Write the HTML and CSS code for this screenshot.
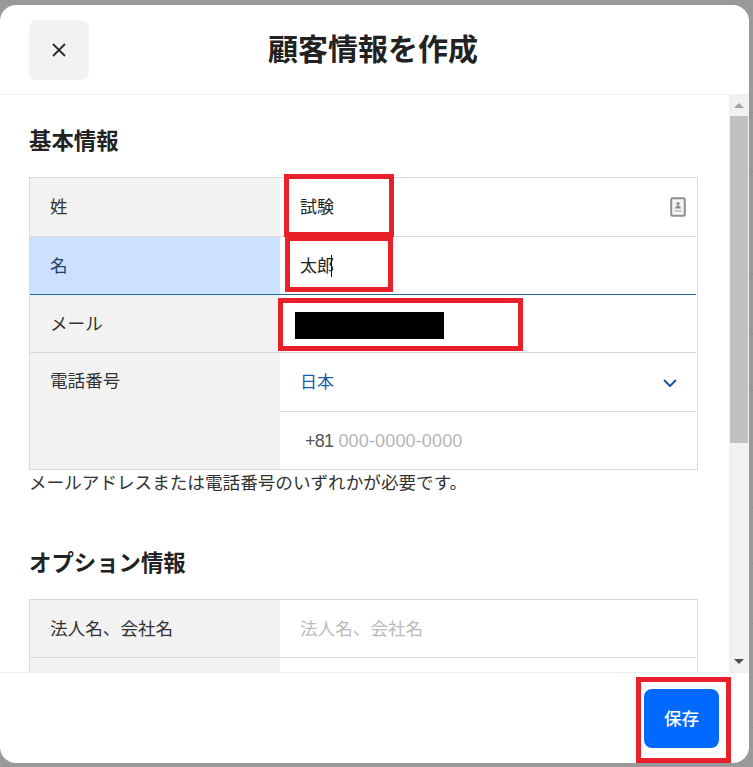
FILE: index.html
```html
<!DOCTYPE html>
<html lang="ja">
<head>
<meta charset="utf-8">
<title>顧客情報を作成</title>
<link rel="stylesheet" href="styles.css">
</head>
<body>
<div class="page">
  <div class="behind">
    <i class="b1"></i><i class="b2"></i><i class="b3"></i><i class="b4"></i><i class="b5"></i><i class="b6"></i><i class="b7"></i><i class="b8"></i><i class="b9"></i>
  </div>
  <div class="modal">
    <header class="head">
      <button class="close" aria-label="閉じる">
        <svg width="16" height="16" viewBox="0 0 16 16"><path d="M2 2 14 14M14 2 2 14" stroke="#2b2b2b" stroke-width="1.8" fill="none"/></svg>
      </button>
      <h1 class="title">顧客情報を作成</h1>
    </header>
    <div class="body">
      <div class="content">
        <h2 class="section first">基本情報</h2>
        <div class="table">
          <div class="row tall">
            <div class="label">姓</div>
            <div class="cell"><span class="value">試験</span>
              <svg class="card" width="16" height="20" viewBox="0 0 16 20"><rect x="1.2" y="1.2" width="13.6" height="17.6" rx="1.5" fill="#f4f4f4" stroke="#8f8f8f" stroke-width="2"/><circle cx="8" cy="6.6" r="1.6" fill="#8a8a8a"/><path d="M5.2 11.5c0-2 1.2-3 2.8-3s2.8 1 2.8 3z" fill="#8a8a8a"/><path d="M4.5 14h7" stroke="#bdbdbd" stroke-width="1.6"/></svg>
            </div>
          </div>
          <div class="row active">
            <div class="label">名</div>
            <div class="cell"><span class="value">太郎</span><span class="caret"></span></div>
          </div>
          <div class="row">
            <div class="label">メール</div>
            <div class="cell"></div>
          </div>
          <div class="row phone">
            <div class="label">電話番号</div>
            <div class="stack">
              <div class="select">
                <span class="country">日本</span>
                <svg width="14" height="8" viewBox="0 0 14 8"><path d="M1 1 7 7 13 1" stroke="#1d55a5" stroke-width="2" fill="none"/></svg>
              </div>
              <div class="tel"><span class="code">+81</span> <span class="hold">000-0000-0000</span></div>
            </div>
          </div>
        </div>
        <p class="hint">メールアドレスまたは電話番号のいずれかが必要です。</p>
        <h2 class="section second">オプション情報</h2>
        <div class="table">
          <div class="row">
            <div class="label">法人名、会社名</div>
            <div class="cell"><span class="ph">法人名、会社名</span></div>
          </div>
          <div class="row">
            <div class="label"></div>
            <div class="cell"></div>
          </div>
        </div>
      </div>
      <div class="scrollbar">
        <div class="arrow"><svg width="10" height="5" viewBox="0 0 10 5"><path d="M5 0 10 5H0z" fill="#a3a3a3"/></svg></div>
        <div class="thumb"></div>
        <div class="track"></div>
        <div class="arrow"><svg width="10" height="5" viewBox="0 0 10 5"><path d="M0 0H10L5 5z" fill="#505050"/></svg></div>
      </div>
    </div>
    <footer class="foot">
      <button class="save">保存</button>
    </footer>
  </div>
  <div class="mark m1"></div>
  <div class="mark m2"></div>
  <div class="mark m3"></div>
  <div class="mark m4"></div>
  <div class="redact"></div>
</div>
</body>
</html>
```
FILE: styles.css
```css
* { box-sizing: border-box; }
html, body { margin: 0; padding: 0; }
body {
  font-family: "Noto Sans CJK JP", "Liberation Sans", sans-serif;
  color: #333;
}
.page {
  position: relative;
  width: 753px;
  height: 767px;
  background: #999;
  overflow: hidden;
  padding-top: 5px;
}
.behind {
  position: absolute;
  top: 0;
  right: 0;
  width: 4px;
  height: 767px;
}
.behind i { position: absolute; left: 0; width: 4px; height: 1px; background: #8d8d8d; }
.b1 { top: 112px; } .b2 { top: 171px; } .b3 { top: 274px; } .b4 { top: 333px; } .b5 { top: 390px; }
.b6 { top: 507px; } .b7 { top: 563px; } .b8 { top: 623px; } .b9 { top: 727px; }

.modal {
  width: 749px;
  height: 758px;
  background: #fff;
  border-radius: 16px;
  overflow: hidden;
  display: flex;
  flex-direction: column;
}
.head {
  flex: none;
  height: 90px;
  border-bottom: 1px solid #eee;
  display: flex;
  align-items: center;
  padding: 0 29px;
  position: relative;
}
.close {
  width: 60px;
  height: 60px;
  border: 0;
  border-radius: 8px;
  background: #f2f2f2;
  display: flex;
  align-items: center;
  justify-content: center;
  padding: 0;
}
.title {
  margin: 0 0 6px 179px;
  font-size: 30px;
  line-height: 40px;
  font-weight: 700;
  color: #222;
}
.body {
  flex: 1;
  min-height: 0;
  display: flex;
}
.content {
  flex: 1;
  min-width: 0;
  overflow: hidden;
  padding: 0 31px 0 29px;
}
.section {
  margin: 0;
  font-size: 22.4px;
  line-height: 32px;
  font-weight: 700;
  color: #222;
}
.section.first { margin-top: 28px; margin-bottom: 22px; }
.section.second { margin-top: 51px; margin-bottom: 22px; }
.table {
  border: 1px solid #d9d9d9;
  padding-right: 1px;
  background: #fff;
}
.row {
  display: flex;
  height: 58px;
  border-bottom: 1px solid #d9d9d9;
}
.row.tall { height: 59px; }
.row.active { border-bottom-color: #1a6a9e; }
.row.phone { height: 116px; border-bottom: 0; }
.label {
  flex: none;
  width: 250px;
  padding-left: 20px;
  padding-bottom: 3px;
  display: flex;
  align-items: center;
  background: #f2f2f2;
  font-size: 17.6px;
  color: #333;
}
.active .label { background: #cce0ff; color: #1f4468; }
.phone .label { align-items: flex-start; padding-top: 14px; }
.cell {
  flex: 1;
  display: flex;
  align-items: center;
  padding-left: 20px;
  padding-bottom: 3px;
  position: relative;
  font-size: 17px;
}
.value { color: #222; }
.caret { width: 1px; height: 22px; background: #111; margin: 3px 0 0 -3px; }
.card { margin-left: auto; margin-right: 10px; margin-top: 3px; }
.ph { color: #bbb; font-size: 17.6px; }
.stack { flex: 1; display: flex; flex-direction: column; }
.select {
  height: 59px;
  border-bottom: 1px solid #d9d9d9;
  display: flex;
  align-items: center;
  justify-content: space-between;
  padding: 0 19px 0 20px;
  font-size: 17px;
  color: #1d5ea8;
}
.country { margin-top: -4px; }
.select svg { margin-top: 2px; }
.tel {
  flex: 1;
  display: flex;
  align-items: center;
  gap: 5px;
  padding-left: 25px;
  padding-top: 1px;
  font-family: "Liberation Sans", sans-serif;
  font-size: 18px;
}
.code { color: #555; letter-spacing: -0.7px; }
.hold { color: #b5b5b5; letter-spacing: 0.15px; }
.hint {
  margin: 0;
  font-size: 17.6px;
  line-height: 24px;
  color: #333;
}
.scrollbar {
  flex: none;
  width: 20px;
  display: flex;
  flex-direction: column;
  background: #f1f1f1;
  padding: 0 1px;
}
.arrow {
  flex: none;
  height: 21px;
  display: flex;
  align-items: center;
  justify-content: center;
}
.thumb { flex: none; height: 327px; background: #c1c1c1; }
.track { flex: 1; }
.foot {
  flex: none;
  height: 91px;
  border-top: 1px solid #eee;
  display: flex;
  justify-content: flex-end;
  padding: 16px 30px 0 0;
}
.save {
  width: 75px;
  height: 59px;
  border: 0;
  border-radius: 8px;
  background: #006aff;
  color: #fff;
  font-family: inherit;
  font-size: 17.6px;
  font-weight: 500;
  padding: 0 0 3px;
}
.mark { position: absolute; border: 5px solid #e8202a; }
.m1 { left: 284px; top: 174px; width: 110px; height: 63px; }
.m2 { left: 285px; top: 236px; width: 108px; height: 56px; }
.m3 { left: 278px; top: 298px; width: 245px; height: 53px; }
.m4 { left: 636px; top: 677px; width: 95px; height: 86px; }
.redact { position: absolute; left: 295px; top: 312px; width: 149px; height: 27px; background: #000; }
```
